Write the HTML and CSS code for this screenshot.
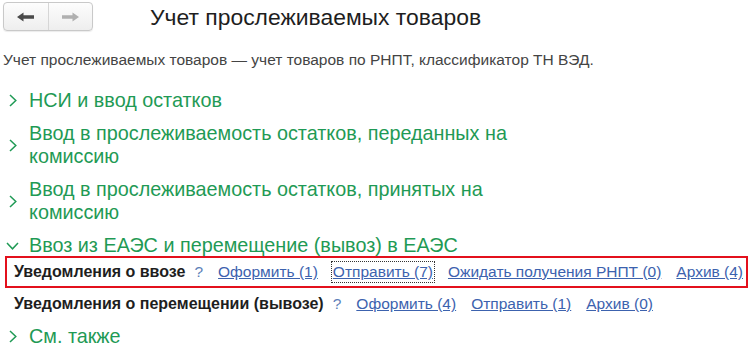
FILE: index.html
```html
<!DOCTYPE html>
<html lang="ru">
<head>
<meta charset="utf-8">
<link rel="stylesheet" href="styles.css">
</head>
<body>
<div class="page">
  <header class="topbar">
    <div class="nav">
      <button class="nav-btn"><svg width="17" height="10" viewBox="0 0 17 10"><path d="M0 5 L6.5 0.5 L6.5 3.3 L17 3.3 L17 6.7 L6.5 6.7 L6.5 9.5 Z" fill="#4a4a4a"/></svg></button>
      <button class="nav-btn"><svg width="17" height="10" viewBox="0 0 17 10"><path d="M17 5 L10.5 0.5 L10.5 3.3 L0 3.3 L0 6.7 L10.5 6.7 L10.5 9.5 Z" fill="#b0b0b0"/></svg></button>
    </div>
    <h1 class="title">Учет прослеживаемых товаров</h1>
  </header>
  <p class="desc">Учет прослеживаемых товаров — учет товаров по РНПТ, классификатор ТН ВЭД.</p>

  <div class="group">
    <span class="chev"><svg width="8" height="13" viewBox="0 0 8 13"><path d="M1 1 L6.8 6.5 L1 12" fill="none" stroke="#1f9a55" stroke-width="1.5"/></svg></span>
    <span class="gtitle">НСИ и ввод остатков</span>
  </div>
  <div class="group">
    <span class="chev"><svg width="8" height="13" viewBox="0 0 8 13"><path d="M1 1 L6.8 6.5 L1 12" fill="none" stroke="#1f9a55" stroke-width="1.5"/></svg></span>
    <span class="gtitle">Ввод в прослеживаемость остатков, переданных на<br>комиссию</span>
  </div>
  <div class="group">
    <span class="chev"><svg width="8" height="13" viewBox="0 0 8 13"><path d="M1 1 L6.8 6.5 L1 12" fill="none" stroke="#1f9a55" stroke-width="1.5"/></svg></span>
    <span class="gtitle">Ввод в прослеживаемость остатков, принятых на<br>комиссию</span>
  </div>
  <div class="group open">
    <span class="chev down"><svg width="13" height="8" viewBox="0 0 13 8"><path d="M1 1 L6.5 6.8 L12 1" fill="none" stroke="#1f9a55" stroke-width="1.5"/></svg></span>
    <span class="gtitle">Ввоз из ЕАЭС и перемещение (вывоз) в ЕАЭС</span>
  </div>
  <div class="row highlight">
    <span class="label">Уведомления о ввозе</span>
    <span class="help">?</span>
    <a class="link" href="#">Оформить (1)</a>
    <a class="link focus" href="#">Отправить (7)</a>
    <a class="link" href="#">Ожидать получения РНПТ (0)</a>
    <a class="link" href="#">Архив (4)</a>
  </div>
  <div class="row plain">
    <span class="label">Уведомления о перемещении (вывозе)</span>
    <span class="help">?</span>
    <a class="link" href="#">Оформить (4)</a>
    <a class="link" href="#">Отправить (1)</a>
    <a class="link" href="#">Архив (0)</a>
  </div>
  <div class="group after-rows">
    <span class="chev"><svg width="8" height="13" viewBox="0 0 8 13"><path d="M1 1 L6.8 6.5 L1 12" fill="none" stroke="#1f9a55" stroke-width="1.5"/></svg></span>
    <span class="gtitle">См. также</span>
  </div>
</div>
</body>
</html>
```
FILE: styles.css
```css
html, body { margin: 0; padding: 0; background: #fff; }
body { font-family: "Liberation Sans", Arial, sans-serif; color: #333; }
.page { width: 752px; height: 356px; overflow: hidden; display: flex; flex-direction: column; }
.topbar { display: flex; align-items: center; height: 32px; flex: none; padding: 1px 0 0 3px; box-sizing: border-box; }
.nav { display: flex; width: 90px; height: 29px; border: 1px solid #c9c9c9; border-radius: 4px; box-sizing: border-box; overflow: hidden; background: linear-gradient(#fdfdfd, #eeeeee); box-shadow: 0 1px 1px rgba(0,0,0,0.08); }
.nav-btn { flex: 1; border: 0; margin: 0; padding: 0; background: transparent; display: flex; align-items: center; justify-content: center; }
.nav-btn + .nav-btn { border-left: 1px solid #d6d6d6; }
.title { margin: 0 0 0 57px; font-size: 22.9px; line-height: 28px; font-weight: normal; color: #1e1e1e; white-space: nowrap; }
.desc { margin: 19px 0 10px 3px; font-size: 15.5px; line-height: 18px; color: #444; white-space: nowrap; }
.group { display: flex; align-items: center; flex: none; margin-top: 10px; color: #1f9a55; font-size: 19.8px; line-height: 23px; }
.chev { width: 29px; flex: none; display: flex; padding-left: 9px; box-sizing: border-box; }
.chev.down { padding-left: 6px; }
.gtitle { display: block; white-space: nowrap; }
.row { display: flex; align-items: center; flex: none; font-size: 15.5px; padding-left: 9px; margin: 0 4px 0 5px; white-space: nowrap; }
.row > * { flex: none; }
.highlight { border: 2px solid #e3101c; height: 32px; box-sizing: border-box; padding-left: 7px; margin-top: -1px; }
.plain { height: 32px; }
.after-rows { margin-top: 5px; }
.label { font-weight: bold; font-size: 16px; color: #1e1e1e; margin-right: 9px; }
.help { color: #5d7fb8; margin-right: 15px; }
.link { color: #3c62ae; text-decoration: underline; margin-right: 15px; }
.focus { outline: 1px dotted #333; outline-offset: 1px; }
```
